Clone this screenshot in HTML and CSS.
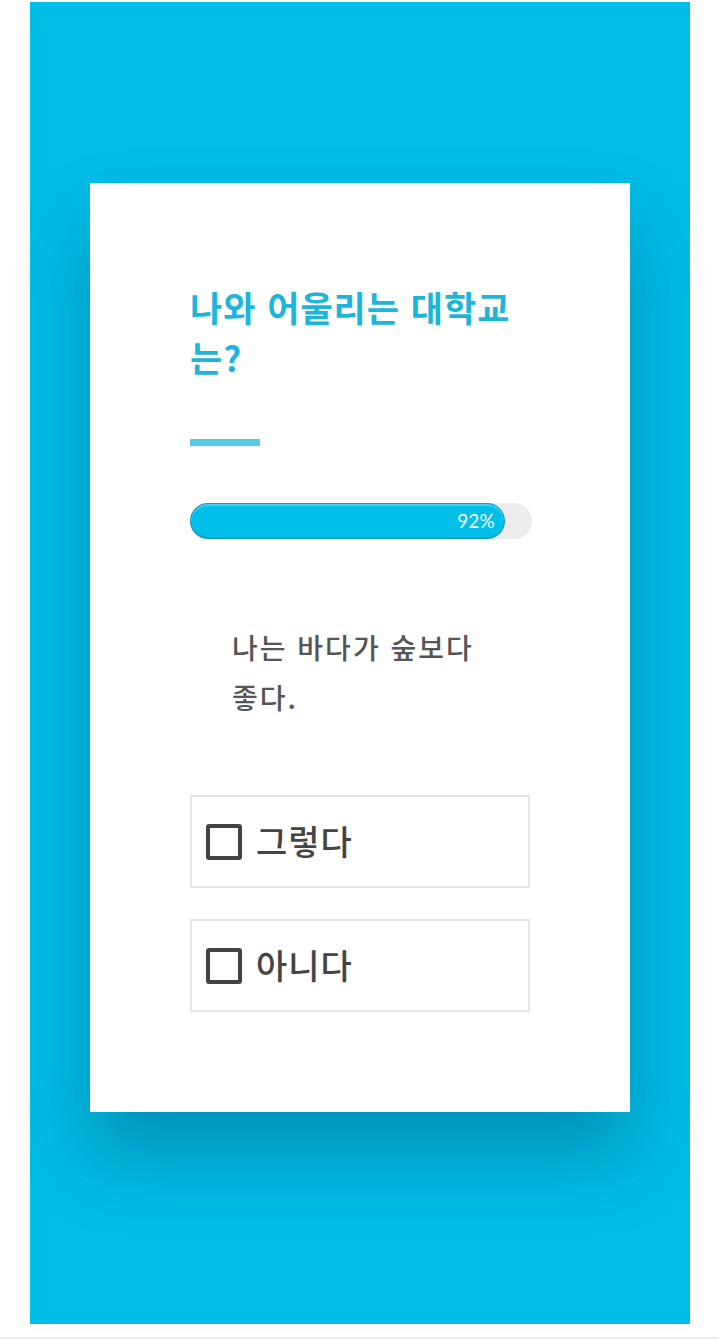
FILE: index.html
```html
<!DOCTYPE html>
<html lang="ko">
<head>
    <meta charset="UTF-8">
    <meta name="viewport" content="width=device-width, initial-scale=1.0">
    <title>나와 어울리는 대학교</title>
    <link rel="stylesheet" href="styles.css">
</head>
<body>
    <div class="stage">
        <div class="card">
            <h1 class="title">나와 어울리는 대학교는?</h1>
            <div class="accent"></div>

            <div class="progress">
                <div class="progress-fill" style="width: 92%;">92%</div>
            </div>

            <p class="question">나는 바다가 숲보다 좋다.</p>

            <div class="options">
                <label class="option">
                    <span class="check"></span>
                    <span class="option-text">그렇다</span>
                </label>
                <label class="option">
                    <span class="check"></span>
                    <span class="option-text">아니다</span>
                </label>
            </div>
        </div>
    </div>
    <div class="bottom-bar"></div>
</body>
</html>
```

FILE: styles.css
```css
* {
    margin: 0;
    padding: 0;
    box-sizing: border-box;
    font-family: 'Noto Sans CJK KR', 'Noto Sans', sans-serif;
}

body {
    background: #fff;
    width: 719px;
    height: 1339px;
    overflow: hidden;
}

.stage {
    margin: 2px 0 0 30px;
    width: 660px;
    height: 1322px;
    background: #00bde6;
    padding: 181px 60px 0;
    box-shadow: 0 0 14px rgba(0, 0, 0, 0.04);
}

.card {
    background: #fff;
    width: 540px;
    height: 929px;
    padding: 99px 0 0 100px;
    box-shadow: 0 45px 70px rgba(0, 40, 60, 0.28);
}

.title {
    width: 345px;
    color: #1db5dc;
    font-size: 35px;
    font-weight: 700;
    line-height: 50px;
    letter-spacing: 1px;
}

.accent {
    width: 70px;
    height: 7px;
    background: #56cbe7;
    margin-top: 57px;
}

.progress {
    margin-top: 57px;
    width: 342px;
    height: 36px;
    border-radius: 18px;
    background: #ececec;
}

.progress-fill {
    height: 36px;
    border-radius: 18px;
    background: #00bfe9;
    border: 1px solid #1a9cc0;
    border-bottom-width: 2px;
    box-shadow: inset 0 2px 0 rgba(255, 255, 255, 0.25);
    color: #fff;
    font-family: 'Lato', 'Open Sans', sans-serif;
    font-size: 19px;
    line-height: 33px;
    text-align: right;
    padding-right: 9px;
}

.question {
    margin: 83px 0 0 42px;
    width: 270px;
    color: #555;
    font-size: 28px;
    font-weight: 500;
    line-height: 50px;
    letter-spacing: 2px;
    word-break: keep-all;
}

.options {
    margin-top: 73px;
    display: flex;
    flex-direction: column;
    gap: 31px;
    width: 340px;
}

.option {
    display: flex;
    align-items: center;
    height: 93px;
    border: 2px solid #e6e6e6;
    padding-left: 14px;
    gap: 14px;
}

.check {
    width: 36px;
    height: 36px;
    border: 4px solid #444;
    border-radius: 3px;
    flex-shrink: 0;
}

.option-text {
    color: #444;
    font-size: 34px;
    font-weight: 500;
    line-height: 40px;
    letter-spacing: 1px;
    margin-top: -2px;
}

.bottom-bar {
    margin-top: 13px;
    height: 2px;
    background: #efefef;
}
```
